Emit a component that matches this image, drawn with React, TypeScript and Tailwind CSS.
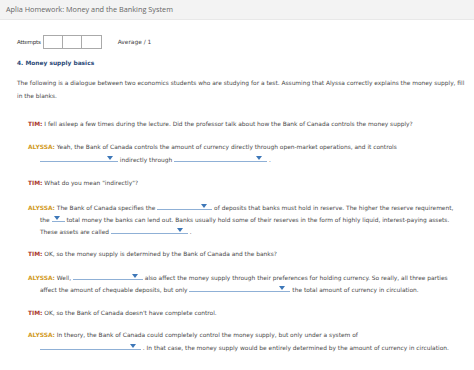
import React from "react";

const F = { fontFamily: '"DejaVu Sans", Verdana, sans-serif' };

function DD({ w }: { w: number }) {
  return (
    <span
      className="relative inline-block h-[9px] border-b border-[#8fb0d6] align-baseline"
      style={{ width: w }}
    >
      <svg
        className="absolute right-[5px] bottom-[1px]"
        width="6"
        height="4"
        viewBox="0 0 6 4"
      >
        <path d="M0 0 H6 L3 4 Z" fill="#3d77b8" />
      </svg>
    </span>
  );
}

function Line({ children, indent = false }: { children: React.ReactNode; indent?: boolean }) {
  return (
    <div className={`h-[12px] leading-[12px] whitespace-pre ${indent ? "pl-[23px]" : "pl-[11px]"}`}>
      {children}
    </div>
  );
}

const Tim = () => <span className="font-bold text-[#a8352b]">TIM:</span>;
const Aly = () => <span className="font-bold text-[#d19a1e]">ALYSSA:</span>;

export default function App() {
  return (
    <div className="w-[474px] h-[370px] bg-white overflow-hidden text-[#4a4a4a] text-[5.9px]" style={F}>
      <div className="h-[20px] bg-[#f3f3f3] border-b border-[#e8e8e8] pl-[6px] flex items-center">
        <span className="text-[7.3px] text-[#666]" style={{ fontFamily: '"Open Sans", sans-serif' }}>
          Aplia Homework: Money and the Banking System
        </span>
      </div>
      <div className="pl-[17px]">
        <div className="mt-[15px] flex items-center h-[14px]">
          <span className="text-[#333] text-[5.5px] tracking-[-0.2px] mr-[2px]">Attempts</span>
          <div className="flex h-[14px] border border-[#aaa]">
            <div className="w-[19px] border-r border-[#aaa]" />
            <div className="w-[19px] border-r border-[#aaa]" />
            <div className="w-[19px]" />
          </div>
          <span className="ml-[16px] text-[#444]">Average / 1</span>
        </div>
        <div className="mt-[8px] h-[12px] leading-[12px] font-bold text-[#2b4a77] text-[5.9px]">
          4. Money supply basics
        </div>
        <div className="mt-[8px] leading-[13px]">
          <div className="whitespace-pre">The following is a dialogue between two economics students who are studying for a test. Assuming that Alyssa correctly explains the money supply, fill</div>
          <div>in the blanks.</div>
        </div>

        <div className="mt-[15px]">
          <Line><Tim /> I fell asleep a few times during the lecture. Did the professor talk about how the Bank of Canada controls the money supply?</Line>
        </div>

        <div className="mt-[11px]">
          <Line><Aly /> Yeah, the Bank of Canada controls the amount of currency directly through open-market operations, and it controls</Line>
          <Line indent><DD w={78} /> indirectly through <DD w={93} /> .</Line>
        </div>

        <div className="mt-[12px]">
          <Line><Tim /> What do you mean "indirectly"?</Line>
        </div>

        <div className="mt-[12px]">
          <Line><Aly /> The Bank of Canada specifies the <DD w={55} /> of deposits that banks must hold in reserve. The higher the reserve requirement,</Line>
          <Line indent>the <DD w={13} /> total money the banks can lend out. Banks usually hold some of their reserves in the form of highly liquid, interest-paying assets.</Line>
          <Line indent>These assets are called <DD w={77} /> .</Line>
        </div>

        <div className="mt-[11px]">
          <Line><Tim /> OK, so the money supply is determined by the Bank of Canada and the banks?</Line>
        </div>

        <div className="mt-[11px]">
          <Line><Aly /> Well, <DD w={70} /> also affect the money supply through their preferences for holding currency. So really, all three parties</Line>
          <Line indent>affect the amount of chequable deposits, but only <DD w={101} /> the total amount of currency in circulation.</Line>
        </div>

        <div className="mt-[12px]">
          <Line><Tim /> OK, so the Bank of Canada doesn't have complete control.</Line>
        </div>

        <div className="mt-[10px]">
          <Line><Aly /> In theory, the Bank of Canada could completely control the money supply, but only under a system of</Line>
          <Line indent><DD w={101} /> . In that case, the money supply would be entirely determined by the amount of currency in circulation.</Line>
        </div>
      </div>
    </div>
  );
}
